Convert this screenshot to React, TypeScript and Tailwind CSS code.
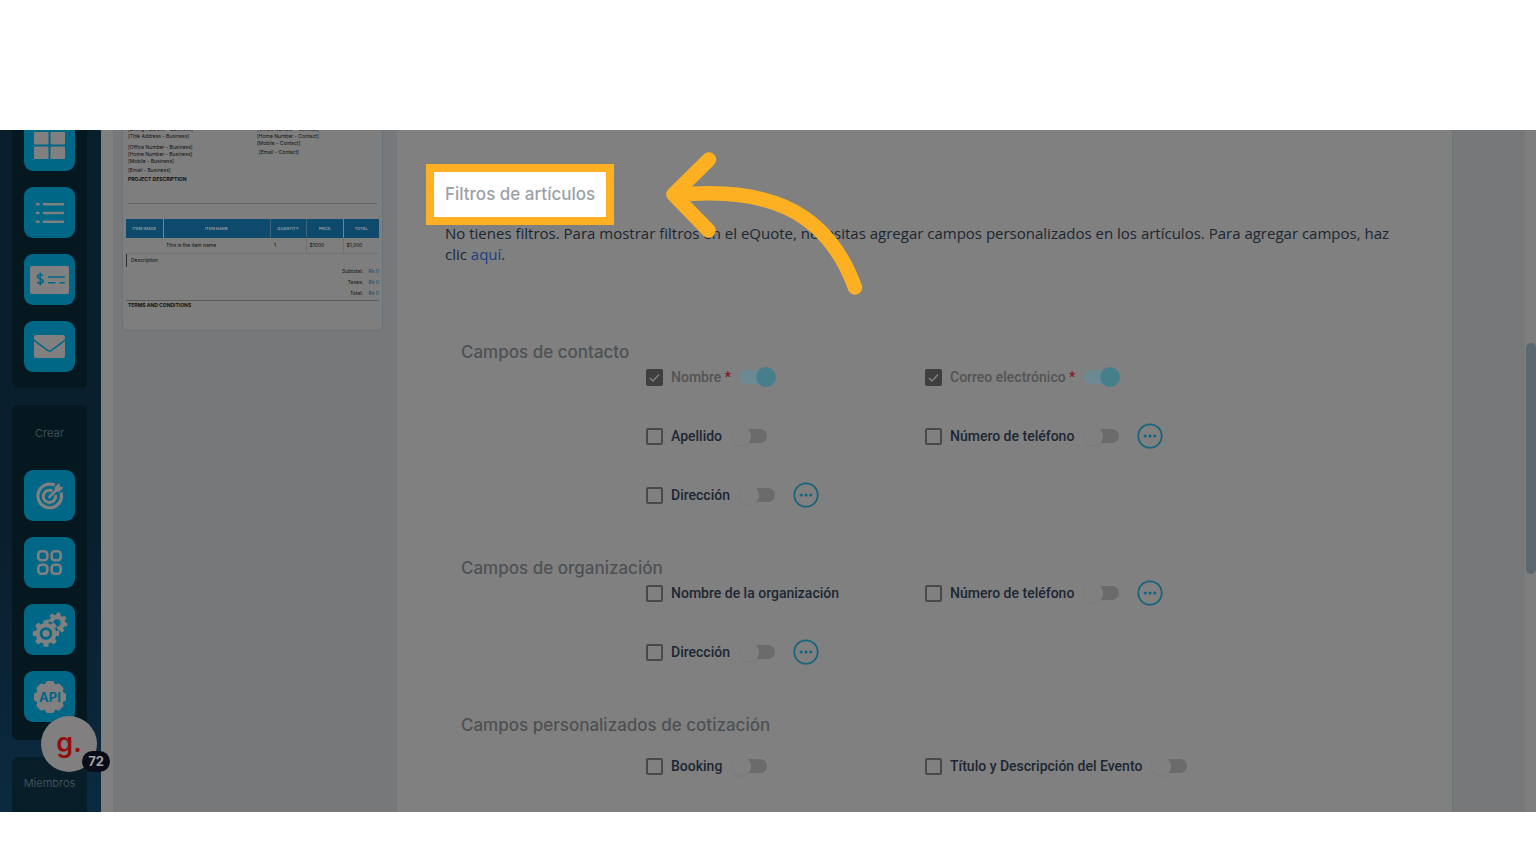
import type { ReactNode } from "react";

type Field = {
  id: string;
  label: string;
  required?: boolean;
  toggle?: boolean;
  more?: boolean;
};

const contactFields: Field[] = [
  { id: "c-nombre", label: "Nombre", required: true, toggle: true },
  { id: "c-correo", label: "Correo electrónico", required: true, toggle: true },
  { id: "c-apellido", label: "Apellido", toggle: true },
  { id: "c-telefono", label: "Número de teléfono", toggle: true, more: true },
  { id: "c-direccion", label: "Dirección", toggle: true, more: true },
];

const organizationFields: Field[] = [
  { id: "o-nombre", label: "Nombre de la organización" },
  { id: "o-telefono", label: "Número de teléfono", toggle: true, more: true },
  { id: "o-direccion", label: "Dirección", toggle: true, more: true },
];

const quoteFields: Field[] = [
  { id: "q-booking", label: "Booking", toggle: true },
  { id: "q-titulo", label: "Título y Descripción del Evento", toggle: true },
];

function Tile({ label, children }: { label: string; children: ReactNode }) {
  return (
    <button
      type="button"
      aria-label={label}
      className="flex size-[51px] shrink-0 items-center justify-center rounded-[9px] bg-[#006786] text-[#808080]"
    >
      {children}
    </button>
  );
}

function Gear({ teeth }: { teeth: number[] }) {
  return (
    <>
      {teeth.map((a) => (
        <rect key={a} x="-2" y="-10.5" width="4" height="5" rx="1" transform={`rotate(${a})`} fill="currentColor" />
      ))}
      <circle r="6" fill="none" stroke="currentColor" strokeWidth="4.6" />
    </>
  );
}

function Sidebar() {
  return (
    <aside className="relative flex w-[101px] shrink-0 bg-linear-to-b from-[#0a1f2e] from-60% to-[#0b2a40] px-3">
      <nav className="-mt-[10px] flex flex-1 flex-col gap-[17px] pr-0.5">
        <div className="flex flex-col items-center gap-4 rounded-b-md bg-[#05181f] pb-4">
          <Tile label="Panel">
            <svg width="31" height="27" viewBox="0 0 31 27" fill="currentColor">
              <rect width="14.5" height="12.5" rx="1" />
              <rect x="16.5" width="14.5" height="12.5" rx="1" />
              <rect y="14.5" width="14.5" height="12.5" rx="1" />
              <rect x="16.5" y="14.5" width="14.5" height="12.5" rx="1" />
            </svg>
          </Tile>
          <Tile label="Lista">
            <svg width="30" height="22" viewBox="0 0 30 22" stroke="currentColor" strokeWidth="2.6" strokeLinecap="round">
              <path d="M2 2.3h1.5M9 2.3h19M2 11h1.5M9 11h19M2 19.7h1.5M9 19.7h19" />
            </svg>
          </Tile>
          <Tile label="Pagos">
            <svg width="39" height="28" viewBox="0 0 39 28">
              <rect width="39" height="28" rx="2" fill="currentColor" />
              <g fill="none" stroke="#006786" strokeWidth="1.6">
                <path d="M13 9.7c-1-1.2-5.300-1.500-5.500.9-.1 3 5.700 1.600 5.700 4.500 0 2.700-4.700 2.500-6 .8M10.300 6.600v12.800" />
                <path d="M18 11h17M18 16.800h7.500M29.500 16.800H35" />
              </g>
            </svg>
          </Tile>
          <Tile label="Correo">
            <svg width="31" height="23" viewBox="0 0 31 23">
              <rect width="31" height="23" rx="2" fill="currentColor" />
              <path d="M-1 4.500 13.500 15.300q2 1.400 4 0L32 4.500" fill="none" stroke="#006786" strokeWidth="1.6" />
            </svg>
          </Tile>
        </div>

        <div className="flex flex-col items-center gap-4 rounded-md bg-[#05181f] pt-5 pb-[18px]">
          <span className="mb-[13px] text-[11px] leading-4 text-[#3d5059]">Crear</span>
          <Tile label="Objetivos">
            <svg width="28" height="28" viewBox="0 0 28 28" fill="none" stroke="currentColor">
              <path d="M18.800 3.300A11.800 11.800 0 1 0 25 10.500" strokeWidth="3.200" />
              <path d="M16.500 9A6.200 6.200 0 1 0 19.500 13" strokeWidth="3" />
              <path d="m13.500 15 8-8" strokeWidth="2.8" strokeLinecap="round" />
              <path d="m18.500 5.500 4.500-4.500 1 3.500 3.500 1-4.500 4.500-4-.5z" fill="currentColor" stroke="none" />
            </svg>
          </Tile>
          <Tile label="Aplicaciones">
            <svg width="25" height="25" viewBox="0 0 25 25" fill="none" stroke="currentColor" strokeWidth="2.6">
              <rect x="1.300" y="1.300" width="9" height="9" rx="3" />
              <rect x="14.700" y="1.300" width="9" height="9" rx="3" />
              <rect x="1.300" y="14.700" width="9" height="9" rx="3" />
              <rect x="14.700" y="14.700" width="9" height="9" rx="3" />
            </svg>
          </Tile>
          <Tile label="Ajustes">
            <svg width="36" height="36" viewBox="0 0 36 36">
              <g transform="translate(25 11)">
                <Gear teeth={[10, 55, 100, 145, 190, 235, 280, 325]} />
              </g>
              <circle cx="14" cy="21.500" r="12.500" fill="#006786" />
              <g transform="translate(14 21.500) scale(1.260)">
                <Gear teeth={[0, 45, 90, 135, 180, 225, 270, 315]} />
                <circle r="5" fill="#006786" />
                <circle r="2.800" fill="currentColor" />
              </g>
            </svg>
          </Tile>
          <Tile label="API">
            <svg width="34" height="34" viewBox="-17 -17 34 34">
              {[0, 45, 90, 135].map((a) => (
                <rect key={a} x="-4.500" y="-16" width="9" height="32" rx="2.500" transform={`rotate(${a})`} fill="currentColor" />
              ))}
              <circle r="14" fill="currentColor" />
              <text y="4.500" textAnchor="middle" fontSize="13" fontWeight="700" fill="#006786">
                API
              </text>
            </svg>
          </Tile>
        </div>

        <div className="flex flex-1 justify-center rounded-t-md bg-[#071d28] pt-[18px]">
          <span className="text-[11px] leading-4 text-[#3d5059]">Miembros</span>
        </div>
      </nav>

      {/* Floating help widget */}
      <button
        type="button"
        className="absolute bottom-10 left-[41px] z-20 flex size-14 items-center justify-center rounded-full bg-[#827f80] text-[27px] leading-none font-semibold text-[#930d0d]"
      >
        <span className="pb-1">g.</span>
        <span className="absolute -right-[13px] bottom-0 flex h-[21px] w-7 items-center justify-center rounded-full bg-[#0a0d17] text-[13px] font-bold text-[#a3a3a3]">
          72
        </span>
      </button>
    </aside>
  );
}

function QuotePreview() {
  return (
    <div className="ml-3 w-[284px] shrink-0 bg-[#777879] px-[9px]">
      <div className="-mt-[5px] w-[261px] rounded-md border border-[#6a7379] bg-[#7e7e7e] px-[3px] pb-[21px] text-[5px] leading-[7px] text-[#101010]">
        <div className="flex gap-[55px] px-0.5 whitespace-nowrap">
          <div className="w-[74px]">
            <p>[Billing Address - Business]</p>
            <p>[Title Address - Business]</p>
            <p className="mt-1">[Office Number - Business]</p>
            <p>[Home Number - Business]</p>
            <p>[Mobile - Business]</p>
            <p className="mt-0.5">[Email - Business]</p>
          </div>
          <div>
            <p>[Office Number - Contact]</p>
            <p>[Home Number - Contact]</p>
            <p>[Mobile - Contact]</p>
            <p className="mt-0.5 ml-0.5">[Email - Contact]</p>
          </div>
        </div>
        <p className="mt-0.5 px-0.5 font-bold">PROJECT DESCRIPTION</p>
        <hr className="mx-0.5 mt-5 mb-[15px] border-[#5d6569]" />
        <table className="w-full table-fixed border-collapse">
          <thead>
            <tr className="h-[19px] bg-[#0e4a6c] text-[4px] text-[#8a949a]">
              <th className="w-[37px] border-r border-[#77838a]">ITEM IMAGE</th>
              <th className="border-r border-[#3c6378]">ITEM NAME</th>
              <th className="w-9 border-r border-[#3c6378]">QUANTITY</th>
              <th className="w-[37px] border-r border-[#77838a]">PRICE</th>
              <th className="w-9">TOTAL</th>
            </tr>
          </thead>
          <tbody>
            <tr className="h-[15px] border-b border-[#747474]">
              <td />
              <td className="pl-[3px]">This is the item name</td>
              <td className="border-r border-[#707070] pl-1">1</td>
              <td className="border-r border-[#707070] pl-[3px]">$1000</td>
              <td className="pl-[3px]">$1,000</td>
            </tr>
          </tbody>
        </table>
        <p className="border-l border-[#303030] py-[3px] pl-1">Description</p>
        <dl className="grid grid-cols-[1fr_12px] gap-x-1 gap-y-1 pt-px text-right">
          <dt>Subtotal:</dt>
          <dd className="text-[#0e4a6c]">Rs 0</dd>
          <dt>Taxes:</dt>
          <dd className="text-[#0e4a6c]">Rs 0</dd>
          <dt>Total:</dt>
          <dd className="text-[#0e4a6c]">Rs 0</dd>
        </dl>
        <hr className="mt-[3px] border-[#5a5a5a]" />
        <p className="mt-px px-0.5 font-bold">TERMS AND CONDITIONS</p>
      </div>
    </div>
  );
}

function FieldRow({ field }: { field: Field }) {
  return (
    <div className="flex h-[26px] items-center font-[Roboto,sans-serif] text-sm font-medium">
      <span className="relative flex">
        <input
          id={field.id}
          type="checkbox"
          defaultChecked={field.required}
          disabled={field.required}
          className="size-[17px] appearance-none rounded-xs border-2 border-[#494949] checked:border-[#3e3e3e] checked:bg-[#3e3e3e]"
        />
        {field.required && (
          <svg className="pointer-events-none absolute inset-0" width="17" height="17" viewBox="0 0 17 17" fill="none">
            <path d="m4 9 3 3 6-6.500" stroke="#808080" strokeWidth="1.500" />
          </svg>
        )}
      </span>
      <label htmlFor={field.id} className={field.required ? "ml-2 text-[#545454]" : "ml-2 text-[#1d2733]"}>
        {field.label}
        {field.required && <span className="text-[#851624]"> *</span>}
      </label>
      {field.toggle && (
        <input
          type="checkbox"
          role="switch"
          aria-label={`${field.label} obligatorio`}
          defaultChecked={field.required}
          disabled={field.required}
          className="relative ml-[9px] h-3.5 w-9 appearance-none rounded-full bg-[#6b6b6b] before:absolute before:-top-[3px] before:left-0 before:size-5 before:rounded-full before:bg-[#808080] before:shadow-[0_1px_1px_#7a7a7a] checked:bg-[#6c8a93] checked:before:left-4 checked:before:bg-[#467e8c] checked:before:shadow-none"
        />
      )}
      {field.more && (
        <button type="button" aria-label="Más opciones" className="ml-[18px] text-[#16657c]">
          <svg width="26" height="26" viewBox="0 0 26 26" fill="currentColor">
            <circle cx="13" cy="13" r="11.700" fill="none" stroke="currentColor" strokeWidth="1.800" />
            <circle cx="8.300" cy="13" r="1.600" />
            <circle cx="13" cy="13" r="1.600" />
            <circle cx="17.700" cy="13" r="1.600" />
          </svg>
        </button>
      )}
    </div>
  );
}

function FieldSection({ title, fields, spaced }: { title: string; fields: Field[]; spaced?: boolean }) {
  return (
    <section>
      <h3 className="text-[17px] leading-6 font-medium text-[#4e5154]">{title}</h3>
      <div
        className={
          spaced
            ? "mt-4 ml-[185px] grid grid-cols-[279px_auto] justify-start gap-y-[33px]"
            : "ml-[185px] grid grid-cols-[279px_auto] justify-start gap-y-[33px]"
        }
      >
        {fields.map((f) => (
          <FieldRow key={f.id} field={f} />
        ))}
      </div>
    </section>
  );
}

export default function App() {
  return (
    <div className="flex min-h-screen flex-col bg-white pt-[130px] pb-[52px] font-[Inter,sans-serif]">
      <div className="relative flex flex-1 overflow-hidden bg-[#808080]">
        <Sidebar />
        <QuotePreview />

        <main className="relative min-w-0 flex-1 border-r border-[#6e7576] pt-[34px] pr-10 pl-[29px]">
          <h2 className="flex h-[61px] w-fit items-center border-8 border-[#fdb022] bg-white px-[11px] text-[17px] font-medium text-[#9ba1a7]">
            Filtros de artículos
          </h2>
          <p className="-mt-0.5 pl-[19px] font-['Open_Sans',sans-serif] text-[15px] leading-[21px] text-[#1b2730]">
            No tienes filtros. Para mostrar filtros en el eQuote, necesitas agregar campos personalizados en los
            artículos. Para agregar campos, haz clic{" "}
            <a href="#" className="text-[#1d3f80]">
              aquí
            </a>
            .
          </p>

          {/* Arrow pointing at the highlighted heading */}
          <svg
            className="pointer-events-none absolute top-[22px] left-[268px]"
            width="198"
            height="144"
            viewBox="665 152 198 144"
            fill="none"
            stroke="#fdb022"
            strokeWidth="14.500"
            strokeLinecap="round"
            strokeLinejoin="round"
          >
            <path d="M709 159.500 673.500 194.500 708.500 230.500" />
            <path d="M676 195C760 187 825 205 855 287.500" />
          </svg>

          <div className="mt-[75px] flex flex-col gap-12 pl-[35px]">
            <FieldSection title="Campos de contacto" fields={contactFields} />
            <FieldSection title="Campos de organización" fields={organizationFields} />
            <FieldSection title="Campos personalizados de cotización" fields={quoteFields} spaced />
          </div>
        </main>

        <div className="w-[72px] shrink-0 bg-[#777879]" />
        <div className="w-[11px] shrink-0 bg-[#7e7e7e] pt-[213px]">
          <div className="ml-px h-[231px] rounded-full bg-[#5b6870]" />
        </div>
      </div>
    </div>
  );
}
